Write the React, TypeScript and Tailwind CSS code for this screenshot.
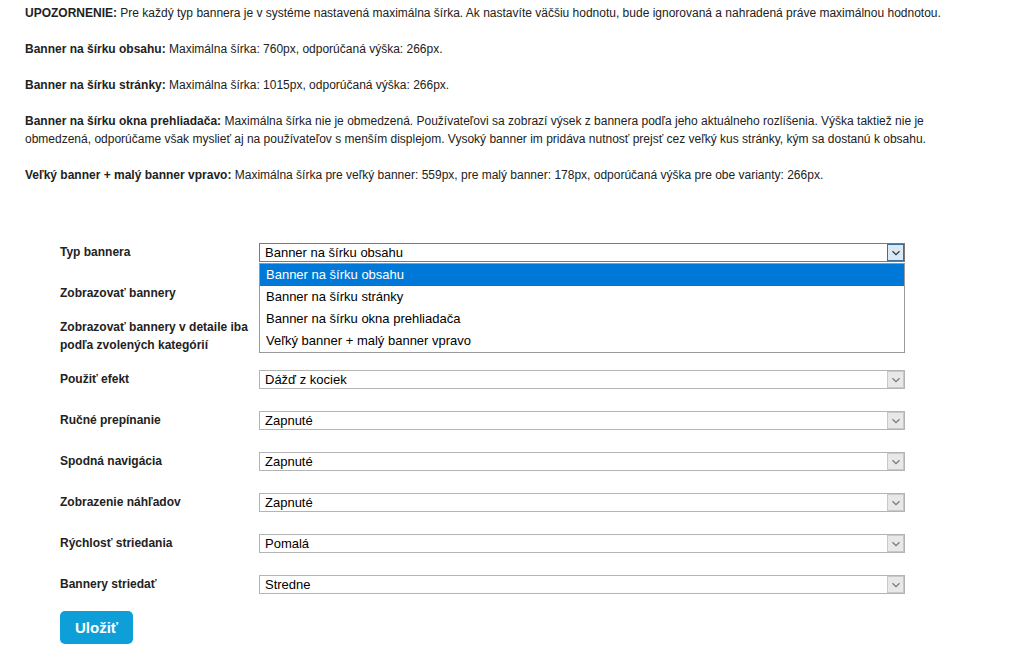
import React from 'react';

const Chevron = ({ className }: { className: string }) => (
  <svg viewBox="0 0 10 6" className={className} fill="none" stroke="currentColor" strokeWidth="1.2">
    <path d="M1.5 1.2 L5 4.6 L8.5 1.2" />
  </svg>
);

function FakeSelect({ value, focused }: { value: string; focused?: boolean }) {
  return (
    <div
      className={`relative flex h-[19px] w-[646px] items-center bg-white pl-[5px] text-[13px] leading-none text-black border ${
        focused ? 'border-[#7a7a7a]' : 'border-[#b4b4b4]'
      }`}
    >
      <span>{value}</span>
      <div
        className={`absolute right-0 top-0 flex h-[17px] w-[17px] items-center justify-center border ${
          focused ? 'border-[#3c6e9e] bg-[#dbe8f5] text-[#333]' : 'border-[#c8c8c8] bg-[#e8e8e8] text-[#777]'
        }`}
      >
        <Chevron className="h-[6px] w-[10px]" />
      </div>
    </div>
  );
}

const options = [
  'Banner na šírku obsahu',
  'Banner na šírku stránky',
  'Banner na šírku okna prehliadača',
  'Veľký banner + malý banner vpravo',
];

const selectRows = [
  { label: 'Použiť efekt', value: 'Dážď z kociek' },
  { label: 'Ručné prepínanie', value: 'Zapnuté' },
  { label: 'Spodná navigácia', value: 'Zapnuté' },
  { label: 'Zobrazenie náhľadov', value: 'Zapnuté' },
  { label: 'Rýchlosť striedania', value: 'Pomalá' },
  { label: 'Bannery striedať', value: 'Stredne' },
];

export default function App() {
  return (
    <div className="min-h-[654px] bg-white pl-[25px] pt-[4px] text-[12px] leading-[18px] text-[#222] font-['Liberation_Sans',Arial,sans-serif]">
      <div className="w-[940px] space-y-[18px]">
        <p>
          <b>UPOZORNENIE:</b> Pre každý typ bannera je v systéme nastavená maximálna šírka. Ak nastavíte väčšiu
          hodnotu, bude ignorovaná a nahradená práve maximálnou hodnotou.
        </p>
        <p>
          <b>Banner na šírku obsahu:</b> Maximálna šírka: 760px, odporúčaná výška: 266px.
        </p>
        <p>
          <b>Banner na šírku stránky:</b> Maximálna šírka: 1015px, odporúčaná výška: 266px.
        </p>
        <p>
          <b>Banner na šírku okna prehliadača:</b> Maximálna šírka nie je obmedzená. Používateľovi sa zobrazí výsek z
          bannera podľa jeho aktuálneho rozlíšenia. Výška taktiež nie je obmedzená, odporúčame však myslieť aj na
          používateľov s menším displejom. Vysoký banner im pridáva nutnosť prejsť cez veľký kus stránky, kým sa
          dostanú k obsahu.
        </p>
        <p>
          <b>Veľký banner + malý banner vpravo:</b> Maximálna šírka pre veľký banner: 559px, pre malý banner: 178px,
          odporúčaná výška pre obe varianty: 266px.
        </p>
      </div>

      {/* Formulár */}
      <div className="ml-[35px] mt-[51px]">
        <div className="relative flex h-[41px] items-start py-2">
          <div className="w-[199px] font-bold">Typ bannera</div>
          <div className="relative">
            <FakeSelect value="Banner na šírku obsahu" focused />
            <div className="absolute left-0 top-[20px] z-10 w-[646px] border border-[#999] bg-white text-[13px]">
              {options.map((o, i) => (
                <div
                  key={o}
                  className={`flex h-[22px] items-center pl-[6px] ${i === 0 ? 'bg-[#0078d7] text-white' : 'text-black'}`}
                >
                  {o}
                </div>
              ))}
            </div>
          </div>
        </div>

        <div className="flex h-[34px] items-start py-2">
          <div className="w-[199px] font-bold">Zobrazovať bannery</div>
          <input type="checkbox" className="mt-[3px]" />
        </div>

        <div className="flex items-start py-2">
          <div className="w-[199px] pr-[2px] font-bold">Zobrazovať bannery v detaile iba podľa zvolených kategórií</div>
          <input type="checkbox" className="mt-[3px]" />
        </div>

        {selectRows.map(r => (
          <div key={r.label} className="flex h-[41px] items-start py-2">
            <div className="w-[199px] font-bold">{r.label}</div>
            <FakeSelect value={r.value} />
          </div>
        ))}

        <button className="mt-[3px] h-[33px] w-[73px] rounded-[5px] bg-[#0f9fd8] text-[15px] font-bold text-white">
          Uložiť
        </button>
      </div>
    </div>
  );
}
